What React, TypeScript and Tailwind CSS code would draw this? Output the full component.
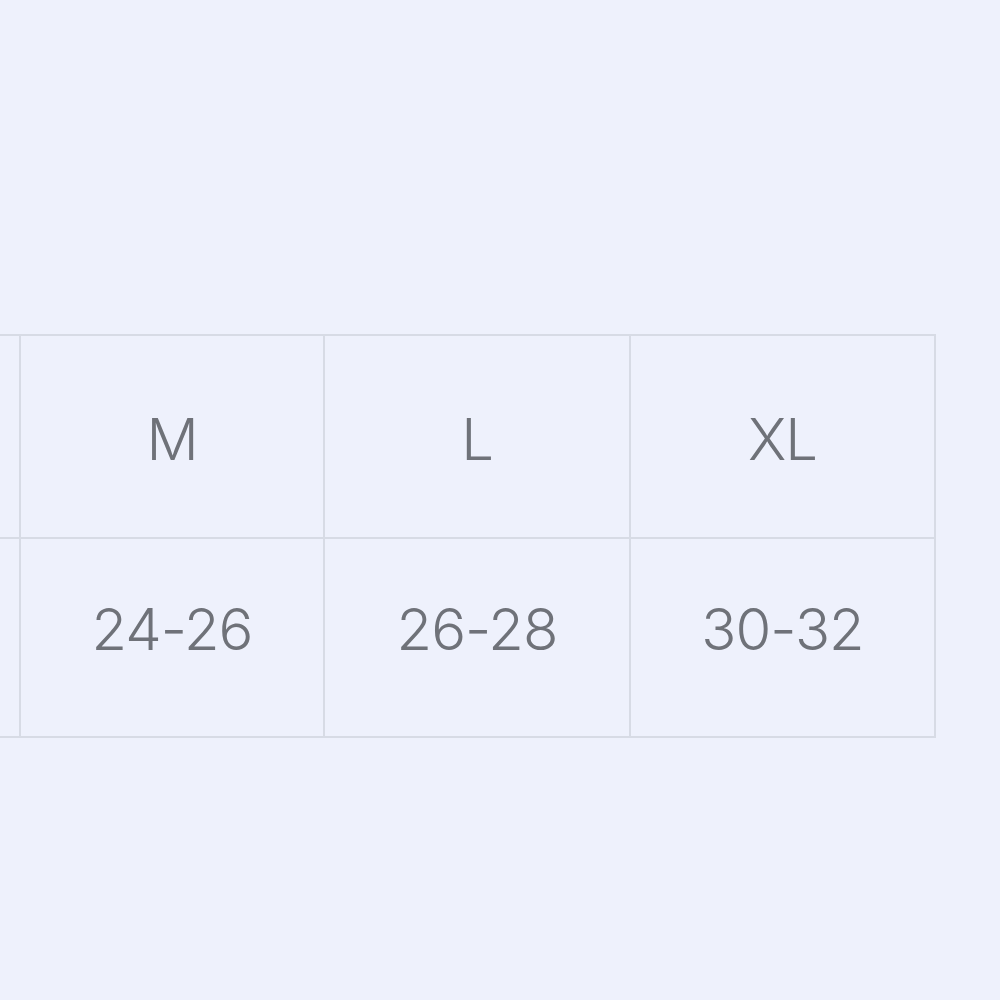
import React from 'react';

const headers = ['', 'M', 'L', 'XL'];
const values = ['', '24-26', '26-28', '30-32'];

export default function App() {
  return (
    <div
      className="w-[1000px] h-[1000px] overflow-hidden bg-[#eef1fc] pt-[334px]"
      style={{ fontFamily: 'Inter, "Noto Sans", sans-serif' }}
    >
      {/* size table, first column cut off by the left edge */}
      <div className="ml-[-284px] w-fit border-t-2 border-[#d7dbe5]">
        <div className="grid grid-cols-[305px_304px_306px_305px]">
          {headers.map((h, i) => (
            <div
              key={i}
              className="h-[203px] flex items-center justify-center border-r-2 border-b-2 border-[#d7dbe5] text-[58px] font-light tracking-[-1px] text-[#6f7279] pt-[6px]"
            >
              {h}
            </div>
          ))}
          {values.map((v, i) => (
            <div
              key={i}
              className="h-[199px] flex items-center justify-center border-r-2 border-b-2 border-[#d7dbe5] text-[58px] font-light tracking-[-1px] text-[#6f7279] pb-[16px]"
            >
              {v}
            </div>
          ))}
        </div>
      </div>
    </div>
  );
}
